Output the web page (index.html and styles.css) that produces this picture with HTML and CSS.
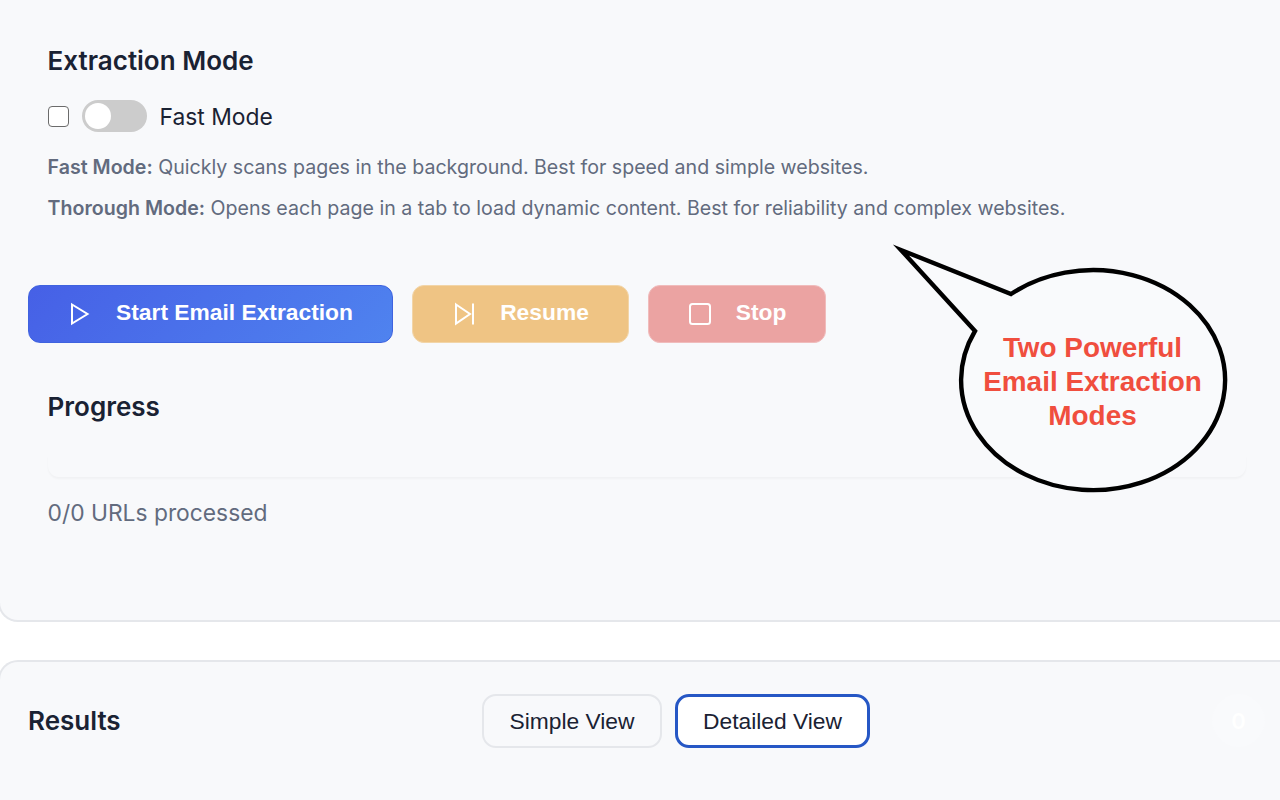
FILE: index.html
```html
<!DOCTYPE html>
<html lang="en">
<head>
<meta charset="utf-8">
<title>Email Extractor</title>
<link rel="stylesheet" href="styles.css">
</head>
<body>
<main class="page">
  <section class="panel panel-main">
    <div class="block mode-block">
      <h2 class="heading">Extraction Mode</h2>
      <label class="mode-row">
        <span class="checkbox"></span>
        <span class="toggle"><span class="knob"></span></span>
        <span class="mode-label">Fast Mode</span>
      </label>
      <p class="desc"><strong>Fast Mode:</strong> Quickly scans pages in the background. Best for speed and simple websites.</p>
      <p class="desc"><strong>Thorough Mode:</strong> Opens each page in a tab to load dynamic content. Best for reliability and complex websites.</p>
    </div>
    <div class="actions">
      <button class="btn btn-start">
        <svg class="btn-icon" viewBox="0 0 24 24" fill="none" stroke="currentColor" stroke-width="2"><path d="M4 2.5l15.5 9.5-15.5 9.5z"/></svg>
        <span class="btn-label">Start Email Extraction</span>
      </button>
      <button class="btn btn-resume">
        <svg class="btn-icon" viewBox="0 0 24 24" fill="none" stroke="currentColor" stroke-width="2"><path d="M4 2.5l14 9.5-14 9.5z"/><path d="M21 1.5v21"/></svg>
        <span class="btn-label">Resume</span>
      </button>
      <button class="btn btn-stop">
        <svg class="btn-icon" viewBox="0 0 24 24" fill="none" stroke="currentColor" stroke-width="2"><rect x="2" y="2" width="20" height="20" rx="2.5"/></svg>
        <span class="btn-label">Stop</span>
      </button>
    </div>
    <div class="block progress-block">
      <h2 class="heading">Progress</h2>
      <div class="bar"></div>
      <p class="count">0/0 URLs processed</p>
    </div>
  </section>
  <section class="panel panel-results">
    <h2 class="heading results-title">Results</h2>
    <div class="views">
      <button class="view">Simple View</button>
      <button class="view view-active">Detailed View</button>
    </div>
    <span class="badge">0</span>
  </section>
</main>
<div class="callout">
  <svg class="bubble" viewBox="0 0 400 270" fill="none">
    <path d="M95 101L21 20L131 64A132 110 0 1 1 95 101Z" stroke="#000" stroke-width="4.4" stroke-miterlimit="20" fill="#f9fafc"/>
  </svg>
  <p class="callout-text">Two Powerful<br>Email Extraction<br>Modes</p>
</div>
</body>
</html>
```
FILE: styles.css
```css
* { box-sizing: border-box; }
html, body { margin: 0; padding: 0; height: 100%; overflow: hidden; background: #fff; }
body { font-family: Inter, "Liberation Sans", sans-serif; color: #1a2233; position: relative; }
.page { display: flex; flex-direction: column; gap: 38px; width: 1300px; margin-left: -2px; }
.panel { background: #f8f9fb; border: 2px solid #e5e7eb; border-radius: 20px; }
.panel-main { height: 622px; border-top: 0; border-top-left-radius: 0; border-top-right-radius: 0; padding: 44px 0 0 0; }
.block { padding-left: 47.6px; width: 1246px; }
.heading { margin: 0; font-size: 26px; font-weight: 600; line-height: 34px; color: #1a2233; }
.mode-row { display: flex; align-items: center; margin-top: 18px; height: 40px; }
.checkbox { width: 21px; height: 21px; border: 1.5px solid #6b6b6b; border-radius: 4px; background: #fff; }
.toggle { width: 65px; height: 32px; margin-left: 13px; border-radius: 16px; background: #ccc; padding: 3px; }
.knob { display: block; width: 26px; height: 26px; border-radius: 50%; background: #fff; }
.mode-label { margin-left: 13px; font-size: 22.8px; color: #1a2233; }
.desc { margin: 0; font-size: 19.6px; line-height: 28px; color: #626b7e; }
.mode-row + .desc { margin-top: 17px; }
.desc + .desc { margin-top: 13px; }
.desc strong { font-weight: 600; }
.actions { display: flex; gap: 19px; margin-top: 62.5px; padding-left: 28px; }
.btn { display: flex; align-items: center; justify-content: center; gap: 24px; height: 58px; border-radius: 12px; border: 1px solid transparent; color: #fff; font-family: "Liberation Sans", Arial, sans-serif; font-size: 22.8px; font-weight: 700; padding: 0; }
.btn-icon { width: 24px; height: 24px; flex: none; }
.btn-label { margin-bottom: 2px; }
.btn-start { width: 365px; background: linear-gradient(135deg, #4660e6, #4f83ef); border-color: #3f63df; }
.btn-resume { width: 217px; background: #efc484; border-color: #f2d5a8; }
.btn-stop { width: 178px; background: #eba3a2; border-color: #f0bcbc; }
.progress-block { margin-top: 47.5px; }
.bar { height: 22px; margin-top: 31px; background: #f8f9fb; border-radius: 0 0 11px 11px; box-shadow: 0 2px 2px rgba(0, 0, 0, 0.03); }
.count { margin: 21px 0 0; font-size: 22.8px; line-height: 30px; color: #626b7e; }
.panel-results { position: relative; height: 140px; display: block; border-bottom: 0; border-bottom-left-radius: 0; border-bottom-right-radius: 0; padding: 0 0 0 28px; }
.results-title { position: absolute; left: 28px; top: 42px; }
.views { display: flex; gap: 13px; position: absolute; left: 482px; top: 32px; }
.view { height: 54px; border-radius: 14px; border: 2px solid #e5e7eb; background: #f8f9fb; color: #1a2233; font-family: "Liberation Sans", Arial, sans-serif; font-size: 22.8px; padding: 0; width: 180px; }
.view-active { width: 195px; background: #fff; border: 3px solid #2657c5; }
.badge { position: absolute; left: 1212px; top: 32px; width: 53px; height: 53px; border-radius: 50%; background: #f9fafc; color: #fff; font-size: 22px; font-weight: 600; display: flex; align-items: center; justify-content: center; }
.callout { position: absolute; left: 880px; top: 230px; width: 400px; height: 270px; }
.bubble { display: block; width: 400px; height: 270px; }
.callout-text { position: absolute; left: 83px; top: 101px; width: 259px; margin: 0; text-align: center; font-family: "Liberation Sans", Arial, sans-serif; font-size: 27.9px; font-weight: 700; line-height: 34px; color: #f04e3e; }
```
